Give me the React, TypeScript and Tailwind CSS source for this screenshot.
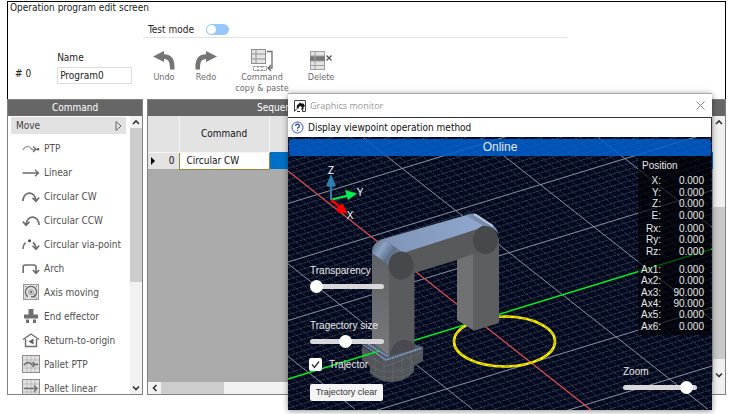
import React from "react";

type IconProps = { name: string };

function CommandIcon({ name }: IconProps) {
  const s = { fill: "none", stroke: "#6e6e6e", strokeWidth: 1.4 } as const;
  const grid = (
    <>
      <rect x="0.5" y="0.5" width="17" height="17" fill="#e2e2e2" stroke="#8c8c8c" />
      <path d="M5 1v16M9 1v16M13 1v16M1 5h16M1 9h16M1 13h16" stroke="#b4b4b4" strokeWidth="0.8" />
    </>
  );
  return (
    <svg viewBox="0 0 18 18" className="h-[18px] w-[18px] shrink-0" aria-hidden="true">
      {name === "ptp" && (
        <>
          <path d="M1 11C3 7 7 6 9 9.500 10 11 12 11 13.500 10.500" {...s} stroke="#9a9a9a" />
          <path d="M11 7.500L14 10.200 11 13" {...s} />
          <circle cx="16" cy="10.200" r="1.300" fill="#5a5a5a" />
        </>
      )}
      {name === "linear" && <path d="M0.500 10h16M13 6.800l3.500 3.200-3.500 3.200" {...s} />}
      {name === "cw" && (
        <path d="M1 14C1 4 13 3 14 14M10.500 10.800L14 14.300l3.200-3.800" {...s} strokeWidth={1.700} />
      )}
      {name === "ccw" && (
        <path d="M17 14C17 4 5 3 4 14M0.800 10.500L4 14.300l3.500-3.500" {...s} strokeWidth={1.700} />
      )}
      {name === "via" && (
        <>
          <path d="M1 14C1 11 2 9 3.500 7.500M11 7.500C13 9 14 11 14 14M10.500 10.800L14 14.300l3.200-3.800" {...s} strokeWidth={1.600} />
          <circle cx="7.500" cy="5.800" r="1.500" fill="#444" />
        </>
      )}
      {name === "arch" && (
        <path d="M1.200 14V8q0-2 2-2H12q2 0 2 2v6M10.800 11L14 14.300 17.200 11" {...s} strokeWidth={1.600} />
      )}
      {name === "axis" && (
        <>
          <rect x="1.500" y="1.500" width="15" height="15" fill="#e2e2e2" stroke="#9a9a9a" />
          <path d="M6 13.700A5.600 5.600 0 1 1 12 13.700M9 13.700h3.500v-2.500" {...s} />
          <circle cx="9" cy="9" r="2.500" {...s} strokeWidth={0.600} />
          <circle cx="9" cy="9" r="1.200" fill="#6e6e6e" />
          <path d="M3 3.500h1M14 3.500h1M3 15h1M14 15h1" stroke="#777" />
        </>
      )}
      {name === "end" && (
        <path d="M6.500 2h5v5.500H16v4H2v-4h4.500zM4 12.500h3V16H4zM11 12.500h3V16h-3z" fill="#707070" />
      )}
      {name === "home" && (
        <>
          <path d="M1 8.500L9 3l8 5.500M3.500 8v7.500h11V8" {...s} />
          <path d="M11.500 7.500v6L6.500 10.500z" fill="#606060" />
        </>
      )}
      {name === "palletptp" && (
        <>
          {grid}
          <path d="M2 10.500C4 6.500 8 7 9.500 9.500h3M10.500 7l2.500 2.500-2.500 2.500" {...s} />
          <circle cx="15" cy="9.500" r="1.100" fill="#5a5a5a" />
        </>
      )}
      {name === "palletlinear" && (
        <>
          {grid}
          <path d="M2 9.500h13M12 6.500l3 3-3 3" {...s} />
        </>
      )}
    </svg>
  );
}

const commands = [
  { icon: "ptp", label: "PTP" },
  { icon: "linear", label: "Linear" },
  { icon: "cw", label: "Circular CW" },
  { icon: "ccw", label: "Circular CCW" },
  { icon: "via", label: "Circular via-point" },
  { icon: "arch", label: "Arch" },
  { icon: "axis", label: "Axis moving" },
  { icon: "end", label: "End effector" },
  { icon: "home", label: "Return-to-origin" },
  { icon: "palletptp", label: "Pallet PTP" },
  { icon: "palletlinear", label: "Pallet linear" },
];

function Chevron({ dir }: { dir: "up" | "down" | "left" }) {
  const d = { up: "M1 6L4 3l3 3", down: "M1 2.500L4 5.500l3-3", left: "M5.500 1L2.500 4l3 3" }[dir];
  return (
    <svg viewBox="0 0 8 8" className="h-2 w-2" aria-hidden="true">
      <path d={d} fill="none" stroke="#333" strokeWidth="1.600" />
    </svg>
  );
}

function Tool({ label, width, children }: { label: React.ReactNode; width: string; children: React.ReactNode }) {
  return (
    <button type="button" className={`flex flex-col items-center text-[9px] leading-[11px] text-[#6a6a6a] ${width}`}>
      <span className="flex h-6 items-center">{children}</span>
      <span className="text-center">{label}</span>
    </button>
  );
}

function Toolbar() {
  return (
    <div className="flex items-start pt-2.5">
      <Tool label="Undo" width="w-[42px]">
        <svg viewBox="0 0 24 22" className="h-[22px] w-6" aria-hidden="true">
          <path d="M1 7.500L12 2v3.200C20 5.500 23 10 22.500 20.500h-4.500C18 13 17 10.500 12 10v3z" fill="#757575" />
        </svg>
      </Tool>
      <Tool label="Redo" width="w-[42px]">
        <svg viewBox="0 0 24 22" className="h-[22px] w-6" aria-hidden="true">
          <path d="M23 7.500L12 2v3.200C4 5.500 1 10 1.500 20.500h4.500C6 13 7 10.500 12 10v3z" fill="#757575" />
        </svg>
      </Tool>
      <Tool label={<>Command<br />copy &amp; paste</>} width="w-[70px]">
        <svg viewBox="0 0 24 24" className="h-6 w-6" aria-hidden="true">
          <rect x="1.500" y="1.500" width="14" height="14" fill="#e4e4e4" stroke="#909090" />
          <path d="M1.500 6h14M1.500 11h14M6 1.500v14" stroke="#909090" />
          <rect x="3.500" y="18.500" width="13" height="4" fill="none" stroke="#858585" strokeDasharray="2 1" />
          <path d="M8 18v5M12 18v5" stroke="#858585" strokeDasharray="2 1" />
          <path d="M17 3.500h5V20h-3.500M21 17l-3 3 3 3" fill="none" stroke="#6e6e6e" strokeWidth="1.300" />
        </svg>
      </Tool>
      <Tool label="Delete" width="w-12">
        <svg viewBox="0 0 24 24" className="h-6 w-6" aria-hidden="true">
          <rect x="1.500" y="3.500" width="14" height="18" fill="#e4e4e4" stroke="#a0a0a0" />
          <rect x="1" y="8" width="15" height="5" fill="#777" />
          <path d="M1.500 8h14M1.500 13h14M1.500 17.500h14M6 3.500v18" stroke="#a0a0a0" />
          <path d="M17.500 7.500l5 5M22.500 7.500l-5 5" stroke="#555" strokeWidth="1.300" />
        </svg>
      </Tool>
    </div>
  );
}

function CommandPanel() {
  return (
    <section className="w-[136px] shrink-0 border border-[#808080] bg-white">
      <h2 className="h-4 bg-[#666] text-center text-[10px] leading-4 text-white">Command</h2>
      <div className="flex h-[278px] overflow-hidden">
        <div className="min-w-0 flex-1 pt-px pl-[3px]">
          <button type="button" className="flex h-[17px] w-[115px] items-center justify-between bg-[#e2e2e2] pr-1 pl-[5px] text-[10px] text-[#444]">
            Move
            <svg viewBox="0 0 7 12" className="h-3 w-[7px]" aria-hidden="true">
              <path d="M1 1.500L6 6l-5 4.500z" fill="none" stroke="#666" />
            </svg>
          </button>
          <ul className="pt-0.5">
            {commands.map((c) => (
              <li key={c.icon}>
                <button type="button" className="flex h-6 items-center gap-1 pl-[11px] text-[10px] whitespace-nowrap text-[#505050]">
                  <CommandIcon name={c.icon} />
                  {c.label}
                </button>
              </li>
            ))}
          </ul>
        </div>
        <div className="flex w-3 flex-col items-center bg-[#f2f2f2]" aria-hidden="true">
          <div className="flex h-3 items-center"><Chevron dir="up" /></div>
          <div className="h-[154px] w-full bg-[#cdcdcd]" />
          <div className="mt-auto flex h-3 items-center"><Chevron dir="down" /></div>
        </div>
      </div>
    </section>
  );
}

function SequencePanel() {
  return (
    <section className="flex min-w-0 flex-1 flex-col border border-[#808080] bg-[#ababab]">
      <h2 className="h-4 shrink-0 bg-[#666] pl-[109px] text-[10px] leading-4 text-white">Sequence</h2>
      <div className="flex min-h-0 flex-1">
        <div className="flex min-w-0 flex-1 flex-col">
          <table className="w-full table-fixed border-collapse text-[10px] text-[#111]">
            <colgroup>
              <col className="w-[31px]" />
              <col className="w-[90px]" />
              <col />
            </colgroup>
            <thead>
              <tr className="h-9 bg-[#e3e3e3]">
                <th className="border-r border-b border-[#f6f6f6]" />
                <th scope="col" className="border-r border-b border-[#f6f6f6] text-center font-normal">Command</th>
                <th />
              </tr>
            </thead>
            <tbody>
              <tr className="h-[17px]">
                <th scope="row" className="bg-[#e3e3e3] p-0 font-normal">
                  <span className="flex items-center justify-between pr-1 pl-[3px]">
                    <svg viewBox="0 0 4 8" className="h-2 w-1" aria-hidden="true"><path d="M0 0l4 4-4 4z" fill="#000" /></svg>
                    0
                  </span>
                </th>
                <td className="border border-[#8f8a3c] bg-white p-0 pl-[7px]">Circular CW</td>
                <td className="bg-[#0070c6] p-0" />
              </tr>
            </tbody>
          </table>
          <div className="mt-auto flex h-3 items-center bg-[#f2f2f2]" aria-hidden="true">
            <div className="flex w-[13px] justify-center"><Chevron dir="left" /></div>
            <div className="h-full w-[63px] bg-[#cdcdcd]" />
          </div>
        </div>
        <div className="flex w-3 flex-col items-center bg-[#f0f0f0]" aria-hidden="true">
          <div className="flex h-[91px] items-start pt-0.5"><Chevron dir="up" /></div>
          <div className="h-[152px] w-full bg-[#c9c9c9]" />
          <div className="pt-3"><Chevron dir="down" /></div>
        </div>
      </div>
    </section>
  );
}

const steps = Array.from({ length: 111 }, (_, i) => i - 50);

function Scene() {
  return (
    <svg viewBox="288 137 424 273" className="block w-full bg-[#010a22]" aria-hidden="true">
      <defs>
        <linearGradient id="elbow" x1="0" y1="0" x2="1" y2="0.600">
          <stop offset="0" stopColor="#58616c" />
          <stop offset="0.400" stopColor="#8ba3c6" />
          <stop offset="0.700" stopColor="#5d6d84" />
          <stop offset="1" stopColor="#8297b8" />
        </linearGradient>
        <linearGradient id="top" x1="0" y1="0" x2="1" y2="0">
          <stop offset="0" stopColor="#7f95b8" />
          <stop offset="1" stopColor="#91a9cf" />
        </linearGradient>
        <linearGradient id="column" x1="0" y1="0" x2="0" y2="1">
          <stop offset="0" stopColor="#5b5e62" />
          <stop offset="1" stopColor="#77797b" />
        </linearGradient>
      </defs>
      <g stroke="#55534f" strokeWidth="0.700" strokeDasharray="3 1">
        {steps.map((i) => {
          const x = 246 + i * 11.76;
          return <line key={`a${i}`} x1={x} y1={138} x2={x + 344} y2={409} strokeOpacity="0.800" />;
        })}
        {steps.map((i) => {
          const y = 379 + i * 5.85;
          return <line key={`b${i}`} x1={288} y1={y} x2={712} y2={y - 130} />;
        })}
      </g>
      <g stroke="#8f939b" strokeWidth="0.900">
        {[-2, -1, 1, 2, 3].map((i) => (
          <line key={`A${i}`} x1={246 + i * 117.6} y1={138} x2={590 + i * 117.6} y2={409} />
        ))}
        {[-3, -2, -1, 1, 2].map((i) => (
          <line key={`B${i}`} x1={288} y1={379 + i * 58.5} x2={712} y2={249 + i * 58.5} />
        ))}
      </g>
      <line x1="288" y1="171" x2="591" y2="410" stroke="#e84c4c" strokeWidth="1.200" />
      <line x1="288" y1="379" x2="712" y2="249" stroke="#00f020" strokeWidth="1.500" />
      <ellipse cx="504.500" cy="341.500" rx="50.500" ry="25" fill="none" stroke="#fff000" strokeWidth="2.600" />
      <ellipse cx="504.500" cy="341.500" rx="50.500" ry="25" fill="none" stroke="#8a8200" strokeWidth="0.600" strokeDasharray="5 3" />

      <path d="M362 346v14l8 6v7q8 9 22 9t22-11v-5l9-5v-15l-37 15z" fill="#5a5d60" fillOpacity="0.900" />
      <path d="M362 352l24 14 37-14M370 366q20 12 45 0M370 372q20 12 45 0M375 354v22M384 360v22M393 358v24M402 355v26M411 352v20" stroke="#76787b" strokeWidth="0.400" fill="none" />
      <path d="M362 343l8-2 44 3 9 3-37 15z" fill="#4f5b70" />
      <path d="M363 345l23 15 36-12M368 344l19 12 26-9" stroke="#8fa4c6" strokeWidth="1.400" fill="none" strokeDasharray="2 0.600" />
      <path d="M362 356.300l17-5.200" stroke="#00f020" strokeWidth="1.500" />

      <path d="M457 258l16-6v78l-16-10z" fill="#707172" />
      <path d="M473 250l26-12v85l-26 8z" fill="#5d5e60" />
      <path d="M372 252q1-11 12-13l21 16-16 14v87l-17-14z" fill="url(#column)" />
      <path d="M389 262h25.500v87L389 356z" fill="#5a5b5d" />
      <path d="M398 253l80-24q18-4 20.500 10v8L473 254l-16 6-42.500 13-20 4z" fill="#58595b" />
      <path d="M383 239l87-25q4-1 8 1l14 10q-8-1-14 4l-75 24z" fill="url(#top)" />
      <path d="M470 214q4-1 8 1l16 11q4 4 4.500 8-5-7-13-7l-20-12z" fill="#778cab" />
      <path d="M474 214l19 12" stroke="#bccbe3" strokeWidth="2" />
      <path d="M372 253q0-11 11-14l20 14q-12 2-14 12z" fill="url(#elbow)" />
      <ellipse cx="401" cy="265.500" rx="12.500" ry="14" fill="#47484b" />
      <ellipse cx="485.500" cy="240" rx="12.500" ry="14" fill="#47484b" />
      <path d="M389.500 356q2-15 14-17 8 0 11 6v4z" fill="#484a4f" />
      <path d="M391 350q4-10 12.500-11 7 0 11 5" fill="none" stroke="#71829f" strokeWidth="0.500" strokeDasharray="2 1" />

      <path d="M331 200v-16" stroke="#2e7fae" strokeWidth="2" />
      <path d="M331 174l5 12q-5 2-10 0z" fill="#2e7fae" />
      <path d="M332 199.500l16-4" stroke="#00f050" strokeWidth="2.200" />
      <path d="M345 190l12 3.500-9 6.500z" fill="#00f050" />
      <path d="M331 200l8 6" stroke="#f00" strokeWidth="2.500" />
      <path d="M342 204l5 9-9-1-1-4z" fill="#f00" stroke="#f00" />
      <g fill="#fff" className="font-['Liberation_Sans',sans-serif] text-[10px]" textAnchor="middle">
        <text x="331" y="174">Z</text>
        <text x="360" y="196">Y</text>
        <text x="350" y="219">X</text>
      </g>
    </svg>
  );
}

const rangeClass =
  "block h-[13px] w-[74px] appearance-none bg-transparent " +
  "[&::-webkit-slider-runnable-track]:h-[5px] [&::-webkit-slider-runnable-track]:rounded-full [&::-webkit-slider-runnable-track]:bg-[#d8d8da] " +
  "[&::-webkit-slider-thumb]:-mt-1 [&::-webkit-slider-thumb]:h-[13px] [&::-webkit-slider-thumb]:w-[13px] [&::-webkit-slider-thumb]:appearance-none [&::-webkit-slider-thumb]:rounded-full [&::-webkit-slider-thumb]:bg-white";

function Slider({ id, label, value }: { id: string; label: string; value: number }) {
  return (
    <div className="flex flex-col gap-[3px]">
      <label htmlFor={id} className="leading-3">{label}</label>
      <input id={id} type="range" defaultValue={value} className={rangeClass} />
    </div>
  );
}

function Readout({ rows, height }: { rows: [string, string][]; height: string }) {
  return (
    <table className={`w-full leading-[11px] ${height}`}>
      <tbody>
        {rows.map(([k, v]) => (
          <tr key={k}>
            <th scope="row" className="w-[23px] p-0 text-right font-normal">{k}:</th>
            <td className="p-0 text-right">{v}</td>
          </tr>
        ))}
      </tbody>
    </table>
  );
}

function GraphicsMonitor() {
  return (
    <section
      aria-label="Graphics monitor"
      className="absolute top-[93px] left-[288px] w-[424px] bg-white shadow-[0_1px_6px_rgba(0,0,0,0.45)]"
    >
      <div className="flex h-6 items-center border-t border-[#aaa] pr-[7px] pl-[6px]">
        <svg viewBox="0 0 12 12" className="h-3 w-3" aria-hidden="true">
          <path d="M0.500 11V0.500h11V11" fill="none" stroke="#444" />
          <path d="M3 8.500Q2 4.500 5 4l.5-1.500 2 1L9.500 3.500 11 6 9.500 7v2.500H7L8 7.500 6.500 6Q4.500 6 4.500 8.500z" fill="#111" />
          <path d="M0.500 11.500l2.500-3M3 11.500h3M8.500 9.500v2h3" fill="none" stroke="#333" />
        </svg>
        <h2 className="pl-1 font-['Open_Sans',sans-serif] text-[9px] text-[#999]">Graphics monitor</h2>
        <button type="button" aria-label="Close" className="ml-auto">
          <svg viewBox="0 0 9 9" className="h-[9px] w-[9px]" aria-hidden="true">
            <path d="M0.500 0.500l8 8M8.500 0.500l-8 8" stroke="#888" />
          </svg>
        </button>
      </div>
      <button type="button" className="flex h-5 w-full items-center gap-1 border-t border-r border-[#333] pl-[3px] text-[10px] text-[#111]">
        <svg viewBox="0 0 13 13" className="h-[13px] w-[13px]" aria-hidden="true">
          <circle cx="6.500" cy="6.500" r="5.500" fill="#fff" stroke="#2c50b4" />
          <path d="M4.600 5q.1-1.800 1.900-1.800T8.400 4.900Q8.400 6 6.500 7v.8M6.500 8.800v1.300" fill="none" stroke="#2040a0" strokeWidth="1.200" />
        </svg>
        Display viewpoint operation method
      </button>
      <div className="relative font-['Liberation_Sans',sans-serif] text-[10px] text-[#e8e8e8]">
        <Scene />
        <div className="absolute inset-0 flex flex-col pt-0.5">
          <p className="mx-px h-[17px] shrink-0 rounded-[3px] bg-[#0060d0]/85 text-center text-[12px] leading-[17px]">Online</p>
          <div className="flex min-h-0 flex-1 justify-between">
            <div className="flex flex-col items-start pt-[109px] pl-[22px]">
              <Slider id="transparency" label="Transparency" value={0} />
              <div className="pt-[27px]">
                <Slider id="size" label="Tragectory size" value={48} />
              </div>
              <label className="-ml-px flex items-center gap-[7px] pt-[9px]">
                <span className="grid">
                  <input type="checkbox" defaultChecked className="col-start-1 row-start-1 h-[13px] w-[13px] appearance-none rounded-[2px] bg-white" />
                  <svg viewBox="0 0 13 13" className="pointer-events-none col-start-1 row-start-1 h-[13px] w-[13px]" aria-hidden="true">
                    <path d="M3 6.500l2.500 3L10 3.500" fill="none" stroke="#333" strokeWidth="1.300" />
                  </svg>
                </span>
                Trajector
              </label>
              <button type="button" className="mt-3 h-[17px] w-[73px] rounded-[2px] bg-[#f4f4f4] text-[9px] leading-[15px] text-[#333]">
                Trajectory clear
              </button>
            </div>
            <div className="flex flex-col">
              <div className="mr-px ml-[15px] flex h-[179px] w-[73px] flex-col bg-black/65 pr-[7px]">
                <h3 className="pt-1 pl-1 leading-3">Position</h3>
                <div className="pt-[3px]"><Readout height="h-[46px]" rows={[["X", "0.000"], ["Y", "0.000"], ["Z", "0.000"], ["E", "0.000"]]} /></div>
                <div className="pt-[2px]"><Readout height="h-[34px]" rows={[["Rx", "0.000"], ["Ry", "0.000"], ["Rz", "0.000"]]} /></div>
                <div className="pt-[7px]">
                  <Readout
                    height="h-[68px]"
                    rows={[["Ax1", "0.000"], ["Ax2", "0.000"], ["Ax3", "90.000"], ["Ax4", "90.000"], ["Ax5", "0.000"], ["Ax6", "0.000"]]}
                  />
                </div>
              </div>
              <div className="pt-[31px]">
                <Slider id="zoom" label="Zoom" value={93} />
              </div>
            </div>
          </div>
        </div>
      </div>
    </section>
  );
}

export default function App() {
  return (
    <div className="relative min-h-screen overflow-hidden bg-white pt-px pr-[5px] pb-4 pl-[7px] font-['DejaVu_Sans_Condensed','DejaVu_Sans',sans-serif] text-[10px] text-[#222]">
      <header className="h-[98px] border-t border-r border-l border-black">
        <h1 className="pl-0.5 leading-3">Operation program edit screen</h1>
        <div className="flex items-start">
          <div className="flex w-[135px] items-end gap-[26px] pt-[38px] pl-[7px]">
            <span className="pb-1 leading-3"># 0</span>
            <div className="flex flex-col gap-[3px]">
              <label htmlFor="name" className="leading-3">Name</label>
              <input id="name" defaultValue="Program0" className="h-[17px] w-[75px] border border-[#ddd] px-0.5 text-[10px]" />
            </div>
          </div>
          <div className="pt-2">
            <label className="flex h-[16px] w-[424px] items-center gap-3 border-b border-[#e2e2e2] pl-[5px]">
              Test mode
              <input
                type="checkbox"
                role="switch"
                className="h-[11px] w-[23px] appearance-none rounded-full bg-[#97c8fb] before:mt-px before:ml-px before:block before:h-[9px] before:w-[9px] before:rounded-full before:bg-white"
              />
            </label>
            <Toolbar />
          </div>
        </div>
      </header>
      <main className="flex gap-1">
        <CommandPanel />
        <SequencePanel />
      </main>
      <GraphicsMonitor />
    </div>
  );
}
